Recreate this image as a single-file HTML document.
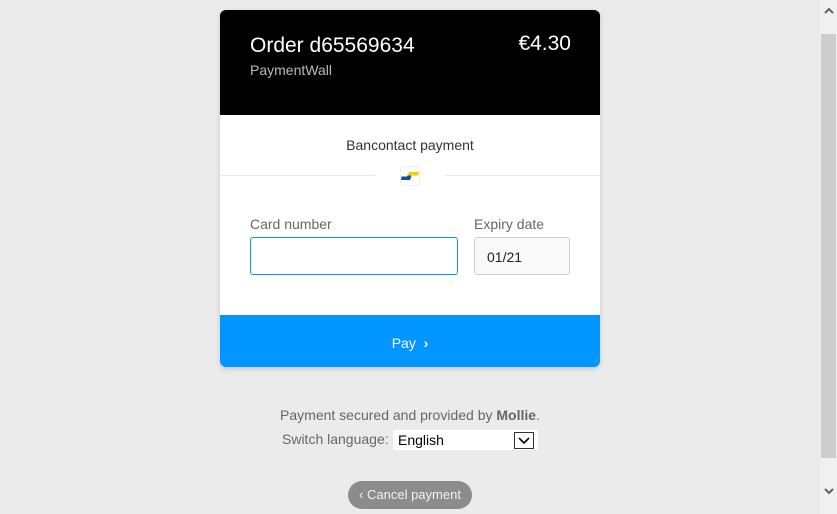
<!DOCTYPE html>
<html><head><meta charset="utf-8"><style>
*{box-sizing:border-box;margin:0;padding:0}
body{width:837px;height:514px;background:#ebebeb;font-family:"Liberation Sans",sans-serif;position:relative;overflow:hidden}
.abs{position:absolute}
.card{left:220px;top:10px;width:380px;height:357px;background:#fff;border-radius:6px;overflow:hidden;box-shadow:0 2px 6px rgba(0,0,0,.15)}
.hd{left:0;top:0;width:380px;height:105px;background:#000}
</style></head><body>
<div class="abs card">
 <div class="abs hd">
  <div class="abs" style="left:30px;top:24px;color:#fff;font-size:21px">Order d65569634</div>
  <div class="abs" style="left:30px;top:52px;color:#bbb;font-size:14px">PaymentWall</div>
  <div class="abs" style="right:29px;top:22px;color:#fff;font-size:21px">€4.30</div>
 </div>
 <div class="abs" style="left:0;width:380px;top:127px;text-align:center;font-size:14px;color:#333">Bancontact payment</div>
 <div class="abs" style="left:0;top:165px;width:155px;height:1px;background:#e8e8e8"></div>
 <div class="abs" style="left:225px;top:165px;width:155px;height:1px;background:#e8e8e8"></div>
 <div class="abs" style="left:180px;top:156px;width:20px;height:20px;border:1px solid #eee;border-radius:4px;background:#fff">
  <svg width="20" height="20" viewBox="0 0 20 20" style="position:absolute;left:-1px;top:-1px"><path d="M9 6h10l-1 3.5H7.5z" fill="#fcc900"/><path d="M1.5 10.5h10l-1.5 3.5H1z" fill="#1c4aa0"/><path d="M7.5 9.5h4l-1 1H7z" fill="#1c4aa0"/></svg>
 </div>
 <div class="abs" style="left:30px;top:206px;font-size:14px;color:#666">Card number</div>
 <div class="abs" style="left:254px;top:206px;font-size:14px;color:#666">Expiry date</div>
 <div class="abs" style="left:30px;top:227px;width:208px;height:38px;border:1px solid #0a95ff;border-radius:3px"></div>
 <div class="abs" style="left:254px;top:227px;width:96px;height:38px;border:1px solid #d0d0d0;border-radius:3px;background:#f9f9f9;font-size:14px;color:#222;padding:11px 0 0 12px">01/21</div>
 <div class="abs" style="left:0;top:305px;width:380px;height:52px;background:#0095ff;color:#fff;font-size:14px;text-align:center;line-height:56px">Pay &nbsp;<b>›</b></div>
</div>
<div class="abs" style="left:0;width:820px;top:407px;text-align:center;font-size:14px;color:#666">Payment secured and provided by <b>Mollie</b>.</div>
<div class="abs" style="left:282px;top:431px;font-size:14px;color:#666">Switch language:</div>
<div class="abs" style="left:393px;top:430px;width:145px;height:20px;background:#fff;border-radius:2px;font-size:14px;color:#000;padding:2px 0 0 5px">English
 <div class="abs" style="left:121px;top:2px;width:20px;height:17px;border:1px solid #333;background:#fff"><svg width="18" height="15"><path d="M4 5l5 5 5-5" stroke="#000" stroke-width="1.6" fill="none"/></svg></div>
</div>
<div class="abs" style="left:348px;top:481px;width:124px;height:28px;border-radius:14px;background:#8c8c8c;color:#f2f2f2;font-size:13px;text-align:center;line-height:28px">‹ Cancel payment</div>
<div class="abs" style="left:820px;top:0;width:17px;height:514px;background:#f0f0f0">
 <svg class="abs" style="left:4px;top:7px" width="10" height="8"><path d="M1 6l4-4 4 4" stroke="#606060" stroke-width="2" fill="none"/></svg>
 <div class="abs" style="left:1px;top:34px;width:15px;height:424px;background:#cdcdcd"></div>
 <svg class="abs" style="left:4px;top:487px" width="10" height="8"><path d="M1 2l4 4 4-4" stroke="#606060" stroke-width="2" fill="none"/></svg>
</div>
</body></html>
